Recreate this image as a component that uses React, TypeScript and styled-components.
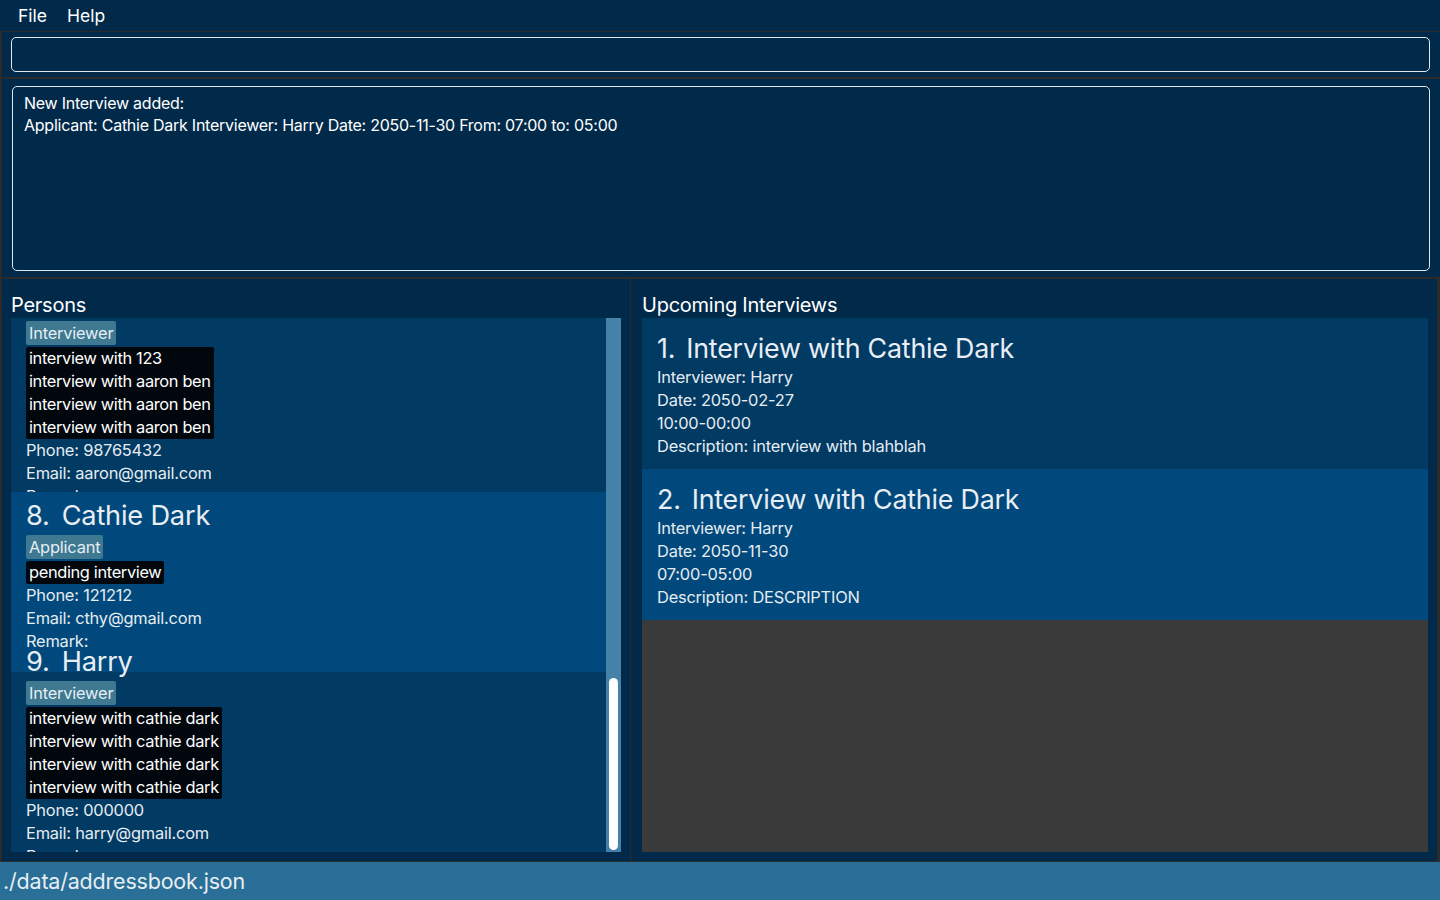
import React from 'react';
import styled, { createGlobalStyle } from 'styled-components';

const GlobalStyle = createGlobalStyle`
  html, body {
    margin: 0;
    padding: 0;
    background: #2b2b2b;
  }
  body {
    font-family: Inter, Roboto, "Liberation Sans", sans-serif;
  }
  * {
    box-sizing: border-box;
  }
`;

const Window = styled.div`
  width: 1440px;
  height: 900px;
  display: flex;
  flex-direction: column;
  background: #2b2b2b;
  overflow: hidden;
`;

const MenuBar = styled.div`
  height: 31px;
  flex: none;
  display: flex;
  align-items: center;
  padding-left: 8px;
  background: #012a4a;
  margin-bottom: 1px;
`;

const MenuItem = styled.div`
  padding: 0 10px;
  font-size: 17.5px;
  color: #ffffff;
`;

const Section = styled.div<{ $height: number }>`
  height: ${(p) => p.$height}px;
  flex: none;
  background: #012a4a;
  margin: 0 0 2px 2px;
  padding: ${(p) => (p.$height > 100 ? '7px 10px 6px 10px' : '5px 10px 5px 9px')};
`;

const CommandBox = styled.div`
  height: 100%;
  border: 1px solid #e4e8ec;
  border-radius: 5px;
`;

const ResultBox = styled.div`
  height: 100%;
  border: 1px solid #e4e8ec;
  border-radius: 5px;
  padding: 5px 11px;
  color: #ffffff;
  font-size: 16px;
  line-height: 22px;
  letter-spacing: -0.25px;
`;

const Split = styled.div`
  flex: 1;
  display: flex;
  gap: 1px;
  padding-left: 2px;
  padding-right: 3px;
  min-height: 0;
`;

const Panel = styled.div<{ $width?: number }>`
  ${(p) => (p.$width ? `width: ${p.$width}px; flex: none;` : 'flex: 1;')}
  display: flex;
  flex-direction: column;
  background: #012a4a;
  padding: ${(p) => (p.$width ? '14px 9px 9px 9px' : '14px 9px 9px 11px')};
  min-width: 0;
`;

const PanelTitle = styled.div`
  font-size: 20px;
  line-height: 25px;
  color: #ffffff;
  letter-spacing: -0.25px;
`;

const ListFrame = styled.div`
  flex: 1;
  display: flex;
  min-height: 0;
  background: #3a3a3a;
`;

const Viewport = styled.div`
  flex: 1;
  overflow: hidden;
  min-width: 0;
`;

const ListColumn = styled.div<{ $scroll?: number }>`
  display: flex;
  flex-direction: column;
  margin-top: ${(p) => -(p.$scroll ?? 0)}px;
`;

const ScrollTrack = styled.div`
  width: 15px;
  flex: none;
  display: flex;
  flex-direction: column;
  justify-content: flex-end;
  padding: 2px 3px;
  background: #4582a9;
`;

const ScrollThumb = styled.div`
  height: 172px;
  background: #ffffff;
  border-radius: 5px;
`;

const Card = styled.div<{ $odd: boolean; $height: number }>`
  position: relative;
  height: ${(p) => p.$height}px;
  flex: none;
  display: flex;
  flex-direction: column;
  justify-content: center;
  padding: 0 15px 10px 15px;
  background: ${(p) => (p.$odd ? '#01497c' : '#013a63')};
  color: #e6ecf2;
  font-size: 16.4px;
  line-height: 23px;
  letter-spacing: -0.2px;
`;

const InterviewCard = styled(Card)`
  padding: 4px 15px 0 15px;
`;

const NameRow = styled.div`
  display: flex;
  gap: 12px;
  font-size: 27.2px;
  line-height: 30px;
  color: #e8eef4;
  margin-bottom: 4px;
  white-space: nowrap;
  letter-spacing: -0.2px;
`;

const TitleRow = styled(NameRow)`
  font-size: 26.8px;
  gap: 11px;
  margin-bottom: 3px;
`;

const Tag = styled.div`
  align-self: flex-start;
  height: 24px;
  line-height: 24px;
  padding: 0 3px;
  border-radius: 2px;
  background: #3e7891;
  color: #e6eef4;
  margin-bottom: 2px;
`;

const RemarkBox = styled.div`
  align-self: flex-start;
  display: flex;
  flex-direction: column;
  padding: 0 3px;
  border-radius: 2px;
  background: #01070c;
  color: #ffffff;
  white-space: nowrap;
  letter-spacing: -0.35px;
`;

const Line = styled.div`
  white-space: nowrap;
`;

const StatusBar = styled.div`
  height: 38px;
  flex: none;
  margin-top: 1px;
  display: flex;
  align-items: center;
  padding-left: 3px;
  background: #2a6f97;
  color: #e6eef4;
  font-size: 21.5px;
  letter-spacing: -0.2px;
`;

interface Person {
  id: number;
  name: string;
  role: string;
  interviews: string[];
  phone: string;
  email: string;
}

interface Interview {
  id: number;
  title: string;
  interviewer: string;
  date: string;
  time: string;
  description: string;
}

const persons: Person[] = [
  {
    id: 7,
    name: 'Aaron Ben',
    role: 'Interviewer',
    interviews: ['interview with 123', 'interview with aaron ben', 'interview with aaron ben', 'interview with aaron ben'],
    phone: '98765432',
    email: 'aaron@gmail.com',
  },
  {
    id: 8,
    name: 'Cathie Dark',
    role: 'Applicant',
    interviews: ['pending interview'],
    phone: '121212',
    email: 'cthy@gmail.com',
  },
  {
    id: 9,
    name: 'Harry',
    role: 'Interviewer',
    interviews: ['interview with cathie dark', 'interview with cathie dark', 'interview with cathie dark', 'interview with cathie dark'],
    phone: '000000',
    email: 'harry@gmail.com',
  },
];

const interviews: Interview[] = [
  {
    id: 1,
    title: 'Interview with Cathie Dark',
    interviewer: 'Harry',
    date: '2050-02-27',
    time: '10:00-00:00',
    description: 'interview with blahblah',
  },
  {
    id: 2,
    title: 'Interview with Cathie Dark',
    interviewer: 'Harry',
    date: '2050-11-30',
    time: '07:00-05:00',
    description: 'DESCRIPTION',
  },
];

const PersonCard: React.FC<{ person: Person }> = ({ person }) => (
  <Card $odd={person.id % 2 === 0} $height={180}>
    <NameRow>
      <span>{person.id}.</span>
      <span>{person.name}</span>
    </NameRow>
    <Tag>{person.role}</Tag>
    <RemarkBox>
      {person.interviews.map((text, i) => (
        <span key={i}>{text}</span>
      ))}
    </RemarkBox>
    <Line>Phone: {person.phone}</Line>
    <Line>Email: {person.email}</Line>
    <Line>Remark:</Line>
  </Card>
);

const App: React.FC = () => {
  return (
    <Window>
      <GlobalStyle />
      <MenuBar>
        <MenuItem>File</MenuItem>
        <MenuItem>Help</MenuItem>
      </MenuBar>

      <Section $height={45}>
        <CommandBox />
      </Section>

      <Section $height={198}>
        <ResultBox>
          <div>New Interview added:</div>
          <div>Applicant: Cathie Dark Interviewer: Harry Date: 2050-11-30 From: 07:00 to: 05:00</div>
        </ResultBox>
      </Section>

      <Split>
        <Panel $width={628}>
          <PanelTitle>Persons</PanelTitle>
          <ListFrame>
            <Viewport>
              <ListColumn $scroll={6}>
                {persons.map((p) => (
                  <PersonCard key={p.id} person={p} />
                ))}
              </ListColumn>
            </Viewport>
            <ScrollTrack>
              <ScrollThumb />
            </ScrollTrack>
          </ListFrame>
        </Panel>

        <Panel>
          <PanelTitle>Upcoming Interviews</PanelTitle>
          <ListFrame>
            <Viewport>
              <ListColumn>
                {interviews.map((iv) => (
                  <InterviewCard key={iv.id} $odd={iv.id % 2 === 0} $height={151}>
                    <TitleRow>
                      <span>{iv.id}.</span>
                      <span>{iv.title}</span>
                    </TitleRow>
                    <Line>Interviewer: {iv.interviewer}</Line>
                    <Line>Date: {iv.date}</Line>
                    <Line>{iv.time}</Line>
                    <Line>Description: {iv.description}</Line>
                  </InterviewCard>
                ))}
              </ListColumn>
            </Viewport>
          </ListFrame>
        </Panel>
      </Split>

      <StatusBar>./data/addressbook.json</StatusBar>
    </Window>
  );
};

export default App;
